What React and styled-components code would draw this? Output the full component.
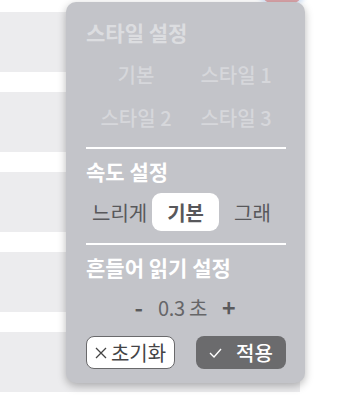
import styled, { createGlobalStyle } from "styled-components";

const GlobalStyle = createGlobalStyle`
  html, body {
    margin: 0;
    padding: 0;
    background: #ffffff;
  }
  body {
    font-family: "Noto Sans CJK KR", "Noto Sans", sans-serif;
  }
`;

const rows = [0, 1, 2, 3, 4];
const styles = ["기본", "스타일 1", "스타일 2", "스타일 3"];
const speeds = ["느리게", "기본", "그래"];

const App = () => {
  return (
    <Page>
      <GlobalStyle />
      <TopBadge />
      <List>
        {rows.map((r) => (
          <Row key={r} />
        ))}
      </List>

      <Panel>
        <SectionTitle $faded>스타일 설정</SectionTitle>
        <StyleGrid>
          {styles.map((s) => (
            <StyleOption key={s}>{s}</StyleOption>
          ))}
        </StyleGrid>
        <Divider />

        <SectionTitle>속도 설정</SectionTitle>
        <SpeedRow>
          {speeds.map((s) => (
            <SpeedOption key={s} $active={s === "기본"}>
              {s}
            </SpeedOption>
          ))}
        </SpeedRow>
        <Divider $gap={12} />

        <SectionTitle>흔들어 읽기 설정</SectionTitle>
        <Stepper>
          <StepButton>-</StepButton>
          <Value>0.3 초</Value>
          <StepButton>+</StepButton>
        </Stepper>

        <Actions>
          <ResetButton>
            <svg width="12" height="12" viewBox="0 0 12 12">
              <path d="M1 1 L11 11 M11 1 L1 11" stroke="#444" strokeWidth="1.3" fill="none" />
            </svg>
            초기화
          </ResetButton>
          <ApplyButton>
            <svg width="13" height="10" viewBox="0 0 13 10">
              <path d="M1 5 L5 9 L12 1" stroke="#fff" strokeWidth="1.4" fill="none" />
            </svg>
            적용
          </ApplyButton>
        </Actions>
      </Panel>
    </Page>
  );
};

const Page = styled.div`
  position: relative;
  width: 338px;
  height: 410px;
  overflow: hidden;
  padding-top: 12px;
  box-sizing: border-box;
`;

const TopBadge = styled.div`
  position: absolute;
  left: 263px;
  top: -20px;
  width: 38px;
  height: 23px;
  border-radius: 8px;
  background: #d9a3a8;
  box-shadow: -4px 0 4px rgba(170, 200, 240, 0.5), 4px 0 4px rgba(170, 200, 240, 0.5);
`;

const List = styled.div`
  display: flex;
  flex-direction: column;
  gap: 20px;
  width: 300px;
`;

const Row = styled.div`
  height: 60px;
  background: #ececee;
`;

const Panel = styled.div`
  position: absolute;
  left: 66px;
  top: 2px;
  width: 239px;
  height: 381px;
  box-sizing: border-box;
  padding: 18px 19px 14px 20px;
  background: #c3c4c9;
  border-radius: 10px;
  box-shadow: 0 3px 8px rgba(0, 0, 0, 0.28);
  display: flex;
  flex-direction: column;
`;

const SectionTitle = styled.div`
  font-size: 21px;
  line-height: 24px;
  font-weight: 700;
  color: ${(p) => (p.$faded ? "#dcdde0" : "#ffffff")};
  white-space: nowrap;
`;

const StyleGrid = styled.div`
  display: grid;
  grid-template-columns: 1fr 1fr;
  grid-auto-rows: 43px;
  margin-top: 9px;
`;

const StyleOption = styled.div`
  display: flex;
  align-items: center;
  justify-content: center;
  font-size: 20px;
  font-weight: 500;
  color: #d6d7db;
  white-space: nowrap;
`;

const Divider = styled.div`
  height: 2px;
  background: #ffffff;
  margin-top: ${(p) => p.$gap || 8}px;
  margin-bottom: 10px;
`;

const SpeedRow = styled.div`
  display: flex;
  align-items: center;
  margin-top: 10px;
  padding-left: 6px;
`;

const SpeedOption = styled.div`
  height: 38px;
  display: flex;
  align-items: center;
  padding: 0 15px;
  border-radius: 9px;
  font-size: 20px;
  font-weight: ${(p) => (p.$active ? 700 : 400)};
  color: #58585b;
  background: ${(p) => (p.$active ? "#ffffff" : "transparent")};
  white-space: nowrap;
  &:first-child {
    padding: 0 5px 0 0;
  }
`;

const Stepper = styled.div`
  display: flex;
  align-items: center;
  justify-content: center;
  gap: 15px;
  height: 30px;
  margin-top: 13px;
  padding-right: 2px;
`;

const StepButton = styled.span`
  font-size: 23px;
  font-weight: 700;
  color: #5a5a5c;
  line-height: 1;
`;

const Value = styled.span`
  font-size: 20px;
  color: #666668;
  letter-spacing: -0.3px;
`;

const Actions = styled.div`
  display: flex;
  justify-content: space-between;
  margin-top: auto;
`;

const ResetButton = styled.div`
  height: 33px;
  box-sizing: border-box;
  width: 89px;
  display: flex;
  align-items: center;
  justify-content: center;
  gap: 4px;
  background: #ffffff;
  border: 1.5px solid #69696b;
  border-radius: 8px;
  font-size: 20px;
  color: #444446;
  white-space: nowrap;
`;

const ApplyButton = styled.div`
  height: 33px;
  width: 90px;
  display: flex;
  align-items: center;
  justify-content: center;
  gap: 14px;
  background: #6b6b6d;
  border-radius: 8px;
  font-size: 20px;
  font-weight: 500;
  color: #ffffff;
  white-space: nowrap;
`;

export default App;
